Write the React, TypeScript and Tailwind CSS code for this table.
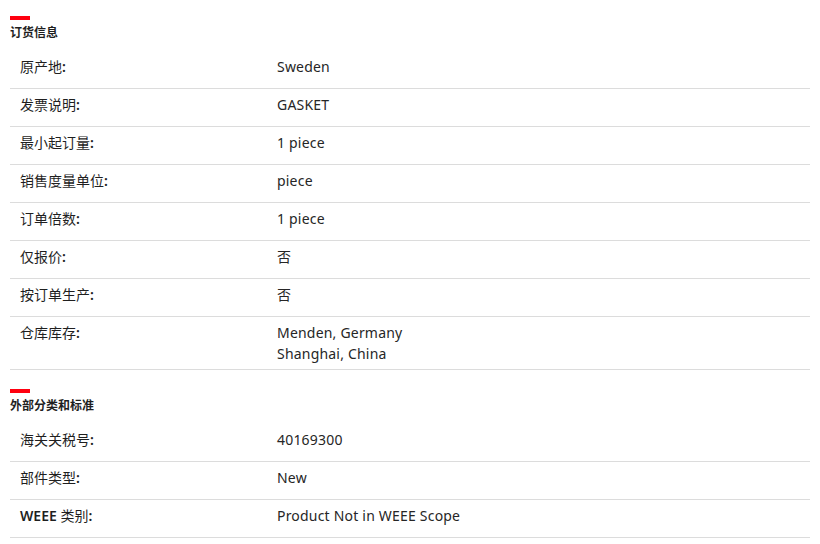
import React from "react";

type Row = { label: string; value: React.ReactNode };

const Label = ({ text }: { text: string }) => {
  // latin runs + colon sit a bit heavier than the CJK glyphs in the reference
  const parts = text.split(/([A-Za-z:]+)/).filter(Boolean);
  return (
    <>
      {parts.map((p, i) =>
        /^[A-Za-z:]+$/.test(p) ? (
          <span key={i} className="font-semibold">
            {p}
          </span>
        ) : (
          <span key={i}>{p}</span>
        )
      )}
    </>
  );
};

const ordering: Row[] = [
  { label: "原产地:", value: "Sweden" },
  { label: "发票说明:", value: "GASKET" },
  { label: "最小起订量:", value: "1 piece" },
  { label: "销售度量单位:", value: "piece" },
  { label: "订单倍数:", value: "1 piece" },
  { label: "仅报价:", value: "否" },
  { label: "按订单生产:", value: "否" },
  {
    label: "仓库库存:",
    value: (
      <>
        <div>Menden, Germany</div>
        <div>Shanghai, China</div>
      </>
    ),
  },
];

const classification: Row[] = [
  { label: "海关关税号:", value: "40169300" },
  { label: "部件类型:", value: "New" },
  { label: "WEEE 类别:", value: "Product Not in WEEE Scope" },
];

const Section = ({
  title,
  rows,
  className,
}: {
  title: string;
  rows: Row[];
  className?: string;
}) => (
  <section className={className}>
    <div className="h-1 w-5 bg-[#ff000f]" />
    <h2 className="mt-[5px] mb-[10px] text-[12px] leading-4 font-bold text-[#1f1f1f]">
      {title}
    </h2>
    <div>
      {rows.map((r, i) => (
        <div
          key={i}
          className="grid min-h-[38px] grid-cols-[267px_1fr] border-b border-[#dcdcdc] py-[5px] text-[14px] leading-[21px]"
        >
          <div className="pl-[10px] text-[#1f1f1f]">
            <Label text={r.label} />
          </div>
          <div className="tracking-[0.2px] text-[#262626]">{r.value}</div>
        </div>
      ))}
    </div>
  </section>
);

export default function App() {
  return (
    <div
      className="min-h-[544px] w-full bg-white px-[10px] pt-4"
      style={{ fontFamily: '"Noto Sans", "Noto Sans CJK SC", sans-serif' }}
    >
      <Section title="订货信息" rows={ordering} />
      <Section title="外部分类和标准" rows={classification} className="mt-[19px]" />
    </div>
  );
}
